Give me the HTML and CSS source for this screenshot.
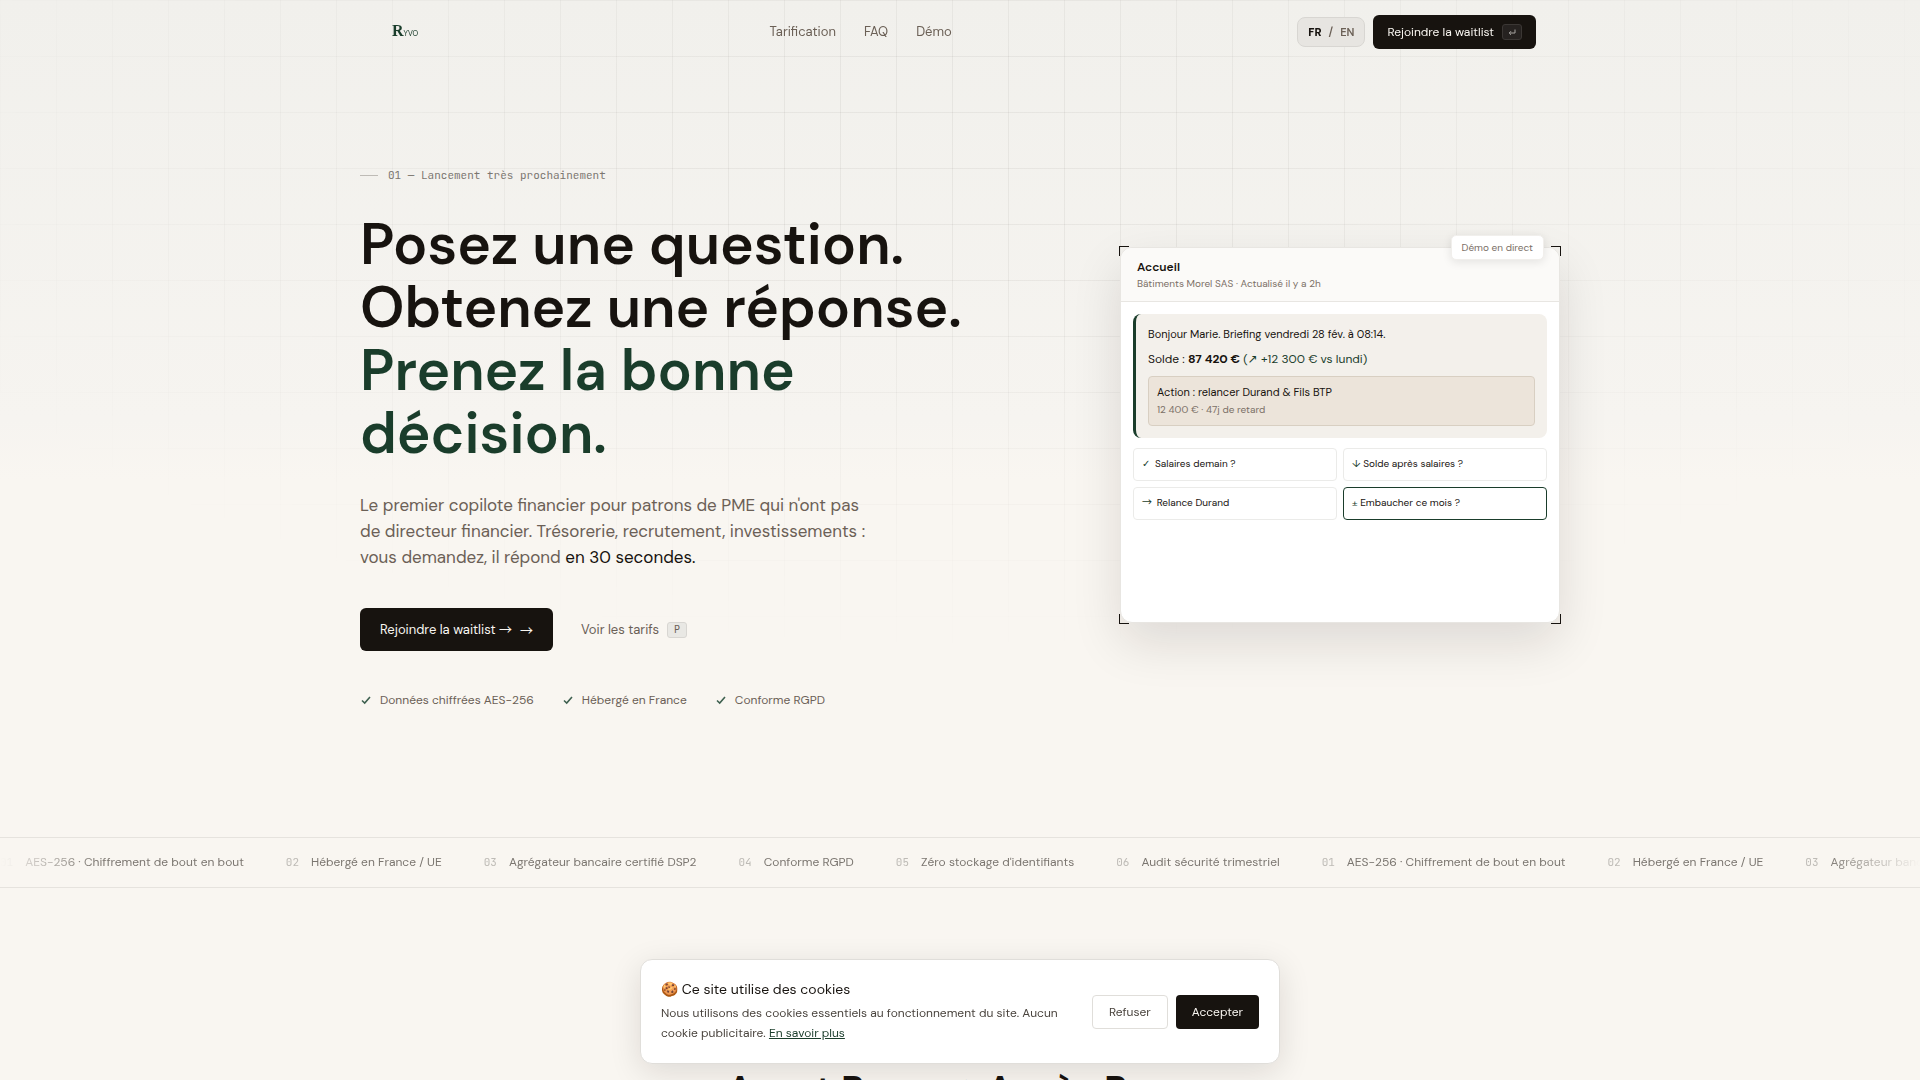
FILE: index.html
```html
<!DOCTYPE html>
<html lang="fr">
<head>
    <meta charset="UTF-8">
    <meta name="viewport" content="width=device-width, initial-scale=1.0">
    <title>Ryvo</title>
    <link rel="stylesheet" href="styles.css">
</head>
<body>

    <header class="navbar">
        <div class="nav-inner">
            <a href="#" class="logo"><span class="logo-r">R</span><span class="logo-rest">YVO</span></a>
            <nav class="nav-links">
                <a href="#tarification">Tarification</a>
                <a href="#faq">FAQ</a>
                <a href="#demo">Démo</a>
            </nav>
            <div class="nav-actions">
                <button class="lang-switch"><strong>FR</strong><span>/</span><span>EN</span></button>
                <a href="#waitlist" class="btn btn-nav">Rejoindre la waitlist
                    <kbd class="key key-dark">
                        <svg width="8" height="8" viewBox="0 0 8 8" fill="none" stroke="currentColor"><path d="M7 1.5V5H1.5M3 3.2L1.2 5L3 6.8"/></svg>
                    </kbd>
                </a>
            </div>
        </div>
    </header>

    <main>
        <!-- Hero -->
        <section class="hero">
            <div class="hero-inner">
                <div class="hero-text">
                    <p class="eyebrow">01 — Lancement très prochainement</p>
                    <h1>Posez une question.<br>Obtenez une réponse.<br><span class="green">Prenez la bonne décision.</span></h1>
                    <p class="lead">Le premier copilote financier pour patrons de PME qui n'ont pas de directeur financier. Trésorerie, recrutement, investissements : vous demandez, il répond <strong>en 30 secondes.</strong></p>
                    <div class="cta-row">
                        <a href="#waitlist" class="btn btn-main"><span>Rejoindre la waitlist <span class="arrow">→</span></span><span class="arrow">→</span></a>
                        <a href="#tarification" class="link-tarifs">Voir les tarifs <kbd class="key">P</kbd></a>
                    </div>
                    <ul class="trust-list">
                        <li><svg width="12" height="12" viewBox="0 0 12 12"><path d="M2 6.5L4.7 9L10 3"/></svg>Données chiffrées AES-256</li>
                        <li><svg width="12" height="12" viewBox="0 0 12 12"><path d="M2 6.5L4.7 9L10 3"/></svg>Hébergé en France</li>
                        <li><svg width="12" height="12" viewBox="0 0 12 12"><path d="M2 6.5L4.7 9L10 3"/></svg>Conforme RGPD</li>
                    </ul>
                </div>

                <!-- Demo card -->
                <div class="demo" id="demo">
                    <span class="corner corner-tl"></span>
                    <span class="corner corner-tr"></span>
                    <span class="corner corner-bl"></span>
                    <span class="corner corner-br"></span>
                    <span class="demo-badge">Démo en direct</span>
                    <div class="demo-card">
                        <div class="demo-header">
                            <h2>Accueil</h2>
                            <p>Bâtiments Morel SAS · Actualisé il y a 2h</p>
                        </div>
                        <div class="demo-body">
                            <div class="briefing">
                                <p class="briefing-hello">Bonjour Marie. Briefing vendredi 28 fév. à 08:14.</p>
                                <p class="briefing-solde">Solde : <strong>87 420 €</strong> <span class="up">(<span class="symbol">↗</span> +12 300 € vs lundi)</span></p>
                                <div class="briefing-action">
                                    <p>Action : relancer Durand &amp; Fils BTP</p>
                                    <small>12 400 € · 47j de retard</small>
                                </div>
                            </div>
                            <div class="questions">
                                <button><span class="symbol">✓</span> Salaires demain ?</button>
                                <button><span>↓</span> Solde après salaires ?</button>
                                <button><span class="arrow">→</span> Relance Durand</button>
                                <button class="active"><span>±</span> Embaucher ce mois ?</button>
                            </div>
                        </div>
                    </div>
                </div>
            </div>
        </section>

        <!-- Scrolling band -->
        <div class="band">
            <ul class="band-track">
                <li><span>01</span>AES-256 · Chiffrement de bout en bout</li>
                <li><span>02</span>Hébergé en France / UE</li>
                <li><span>03</span>Agrégateur bancaire certifié DSP2</li>
                <li><span>04</span>Conforme RGPD</li>
                <li><span>05</span>Zéro stockage d'identifiants</li>
                <li><span>06</span>Audit sécurité trimestriel</li>
                <li><span>01</span>AES-256 · Chiffrement de bout en bout</li>
                <li><span>02</span>Hébergé en France / UE</li>
                <li><span>03</span>Agrégateur bancaire certifié DSP2</li>
            </ul>
        </div>

        <section class="compare">
            <h2>Avant Ryvo <span class="arrow">→</span> Après Ryvo</h2>
        </section>
    </main>

    <!-- Cookie banner -->
    <div class="cookie-wrap">
        <div class="cookie">
            <div class="cookie-text">
                <h2>🍪 Ce site utilise des cookies</h2>
                <p>Nous utilisons des cookies essentiels au fonctionnement du site. Aucun cookie publicitaire. <a href="#cookies">En savoir plus</a></p>
            </div>
            <div class="cookie-buttons">
                <button class="refuse">Refuser</button>
                <button class="accept">Accepter</button>
            </div>
        </div>
    </div>

</body>
</html>
```

FILE: styles.css
```css
* {
    box-sizing: border-box;
    margin: 0;
    padding: 0;
}

body {
    font-family: 'DM Sans', Inter, sans-serif;
    background-color: #f9f6f1;
    color: #17130f;
}

a {
    color: inherit;
    text-decoration: none;
}

button {
    font-family: inherit;
    cursor: pointer;
}

ul {
    list-style: none;
}

.arrow {
    font-family: 'Noto Sans CJK JP', sans-serif;
    line-height: 1;
}

.symbol {
    font-family: 'DejaVu Sans', sans-serif;
}

/* Navbar */
.navbar {
    position: fixed;
    top: 0;
    left: 0;
    right: 0;
    z-index: 10;
    padding-top: 8px;
}

.nav-inner {
    display: flex;
    justify-content: space-between;
    align-items: center;
    max-width: 1200px;
    height: 48px;
    margin: 0 auto;
    padding: 0 24px 0 32px;
}

.logo {
    min-width: 32px;
    color: #1a3d2b;
    line-height: 20px;
}

.logo-r {
    font-family: 'Liberation Serif', serif;
    font-size: 16px;
    font-weight: bold;
}

.logo-rest {
    font-family: Lato, sans-serif;
    font-size: 7px;
}

.nav-links {
    display: flex;
    gap: 28px;
    font-size: 13px;
    line-height: 20px;
    color: #6b6056;
}

.nav-actions {
    display: flex;
    justify-content: flex-end;
    align-items: center;
    gap: 8px;
}

.lang-switch {
    display: flex;
    gap: 7px;
    padding: 0 10px;
    border: 1px solid #d8d6d2;
    border-radius: 8px;
    background-color: #e7e5e1;
    color: #6b6056;
    font-size: 11px;
    font-weight: 600;
    line-height: 28px;
}

.lang-switch strong {
    color: #17130f;
}

.btn {
    display: inline-flex;
    align-items: center;
    border-radius: 6px;
    background-color: #17130f;
    color: #f9f6f1;
}

.btn-nav {
    gap: 8px;
    height: 34px;
    padding: 0 14px;
    font-size: 12px;
}

.key {
    display: inline-flex;
    justify-content: center;
    align-items: center;
    width: 20px;
    height: 16px;
    border: 1px solid #d8d6d2;
    border-radius: 3px;
    background-color: #e9e8e4;
    font-family: 'JetBrains Mono', 'Liberation Mono', monospace;
    font-size: 10px;
}

.key-dark {
    border-color: #3b3734;
    background-color: #262220;
    color: #a8a5a1;
}

/* Hero */
.hero {
    position: relative;
    padding: 162px 24px 130px;
    background: linear-gradient(#f1f0ec, #f6f4f0 420px, #f9f6f1 480px);
}

.hero::before {
    content: '';
    position: absolute;
    inset: 0;
    background-image:
        linear-gradient(to right, rgba(23, 19, 15, 0.05) 1px, transparent 1px),
        linear-gradient(to bottom, rgba(23, 19, 15, 0.05) 1px, transparent 1px);
    background-size: 56px 56px;
    -webkit-mask-image: radial-gradient(ellipse 65% 65% at 50% 20%, black 20%, transparent 90%);
    mask-image: radial-gradient(ellipse 65% 65% at 50% 20%, black 20%, transparent 90%);
}

.hero-inner {
    position: relative;
    display: grid;
    grid-template-columns: 1fr 440px;
    gap: 96px;
    align-items: center;
    max-width: 1200px;
    margin: 0 auto;
}

.eyebrow {
    display: flex;
    align-items: center;
    gap: 10px;
    font-family: 'JetBrains Mono', 'Liberation Mono', monospace;
    font-size: 11px;
    line-height: 26px;
    color: #7b7670;
}

.eyebrow::before {
    content: '';
    width: 18px;
    height: 1px;
    background-color: #bebbb6;
}

h1 {
    margin: 25px 0 27px;
    font-size: 57px;
    font-weight: 600;
    line-height: 63px;
}

.green {
    color: #1a3d2b;
}

.lead {
    max-width: 520px;
    font-size: 17px;
    line-height: 26px;
    color: #6b6056;
}

.lead strong {
    font-weight: 400;
    color: #17130f;
}

.cta-row {
    display: flex;
    align-items: center;
    gap: 28px;
    margin: 38px 0 42px;
    font-size: 13px;
}

.btn-main {
    gap: 8px;
    height: 43px;
    padding: 0 20px;
}

.link-tarifs {
    display: flex;
    align-items: center;
    gap: 8px;
    color: #6b6056;
}

.trust-list {
    display: flex;
    gap: 28px;
    font-size: 12px;
    line-height: 14px;
    color: #6b6056;
}

.trust-list li {
    display: flex;
    align-items: center;
    gap: 8px;
}

.trust-list svg {
    fill: none;
    stroke: #3f6150;
    stroke-width: 1.6;
}

/* Demo card */
.demo {
    position: relative;
}

.demo-card {
    min-height: 376px;
    border: 1px solid #e8e6e2;
    border-radius: 12px;
    background-color: #fff;
    box-shadow: 0 20px 50px rgba(23, 19, 15, 0.12);
    overflow: hidden;
}

.corner {
    position: absolute;
    width: 10px;
    height: 10px;
    border: 0 solid #17130f;
}

.corner-tl {
    top: -1px;
    left: -1px;
    border-width: 1px 0 0 1px;
}

.corner-tr {
    top: -1px;
    right: -1px;
    border-width: 1px 1px 0 0;
}

.corner-bl {
    bottom: -1px;
    left: -1px;
    border-width: 0 0 1px 1px;
}

.corner-br {
    bottom: -1px;
    right: -1px;
    border-width: 0 1px 1px 0;
}

.demo-badge {
    position: absolute;
    top: -12px;
    right: 16px;
    padding: 0 10px;
    border: 1px solid #f1efec;
    border-radius: 5px;
    background-color: #fff;
    box-shadow: 0 2px 10px rgba(23, 19, 15, 0.1);
    font-size: 10px;
    line-height: 23px;
    color: #7b7067;
}

.demo-header {
    padding: 10px 16px;
    border-bottom: 1px solid #e8e6e2;
    background-color: #fbfaf8;
}

.demo-header h2 {
    font-size: 12px;
    font-weight: 600;
    line-height: 18px;
}

.demo-header p {
    font-size: 10px;
    line-height: 15px;
    color: #7b7067;
}

.demo-body {
    padding: 12px;
}

.briefing {
    padding: 12px;
    border-left: 3px solid #1a3d2b;
    border-radius: 8px;
    background-color: #f3f0eb;
}

.briefing-hello {
    font-size: 11px;
    line-height: 16px;
}

.briefing-solde {
    margin: 8px 0;
    font-size: 12px;
    line-height: 18px;
}

.up {
    color: #1a3d2b;
}

.briefing-action {
    padding: 7px 8px;
    border: 1px solid #d8cfc2;
    border-radius: 4px;
    background-color: #ece4da;
    font-size: 11px;
    line-height: 17px;
}

.briefing-action small {
    display: block;
    font-size: 10px;
    color: #7b7067;
}

.questions {
    display: grid;
    grid-template-columns: 1fr 1fr;
    gap: 6px;
    margin-top: 10px;
}

.questions button {
    height: 33px;
    padding: 0 8px;
    border: 1px solid #ebebe9;
    border-radius: 4px;
    background-color: #fff;
    color: #17130f;
    font-size: 10px;
    line-height: 30px;
    text-align: left;
}

.questions button span {
    color: #1a3d2b;
}

.questions .arrow,
.questions .symbol {
    margin-right: 2px;
}

.questions .active {
    border-color: #1a3d2b;
}

/* Scrolling band */
.band {
    border-top: 1px solid #e6e3de;
    border-bottom: 1px solid #e6e3de;
    overflow: hidden;
}

.band-track {
    display: flex;
    gap: 42px;
    white-space: nowrap;
    font-size: 12px;
    line-height: 49px;
    color: #7b7670;
    -webkit-mask-image: linear-gradient(to right, transparent, black 96px, black calc(100% - 96px), transparent);
    mask-image: linear-gradient(to right, transparent, black 96px, black calc(100% - 96px), transparent);
}

.band-track span {
    margin-right: 12px;
    font-family: 'JetBrains Mono', 'Liberation Mono', monospace;
    font-size: 11px;
    color: #bebbb6;
}

.compare {
    padding: 178px 24px 0;
}

.compare h2 {
    font-size: 38px;
    font-weight: 600;
    line-height: 48px;
    text-align: center;
}

/* Cookie banner */
.cookie-wrap {
    position: fixed;
    left: 16px;
    right: 16px;
    bottom: 16px;
    z-index: 20;
    display: flex;
    justify-content: center;
}

.cookie {
    display: flex;
    align-items: center;
    gap: 24px;
    width: 640px;
    padding: 19px 20px;
    border: 1px solid #e0deda;
    border-radius: 12px;
    background-color: #fff;
    box-shadow: 0 8px 32px rgba(23, 19, 15, 0.12);
}

.cookie-text {
    flex: 1;
    padding-bottom: 1px;
}

.cookie h2 {
    margin-bottom: 3px;
    font-size: 14px;
    font-weight: 400;
    line-height: 21px;
}

.cookie p {
    font-size: 12px;
    line-height: 20px;
    color: #4a443e;
}

.cookie p a {
    color: #1a3d2b;
    text-decoration: underline;
}

.cookie-buttons {
    display: flex;
    gap: 8px;
}

.cookie button {
    height: 34px;
    padding: 0 16px;
    border: 1px solid #e0deda;
    border-radius: 4px;
    background-color: #fff;
    color: #4a443e;
    font-size: 12px;
}

.cookie .accept {
    border: none;
    background-color: #17130f;
    color: #f9f6f1;
}
```
